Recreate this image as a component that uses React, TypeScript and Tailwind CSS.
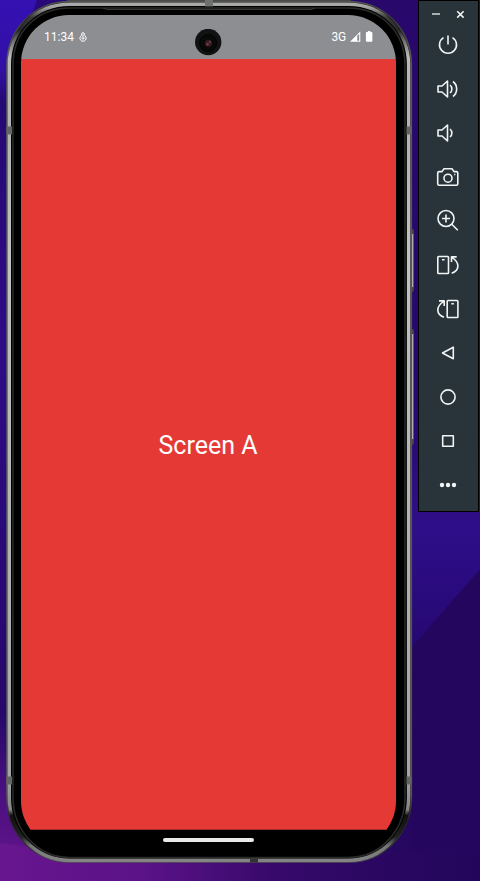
import React from "react";

const FRAME = "M70 1.5H348C384 1.5 411.3 29 411.3 65V797C411.3 834 384 862 348 862H70C34 862 7 834 7 797V65C7 29 34 1.5 70 1.5Z";
const METAL = "M70 4.2H348C383 4.2 408.6 31 408.6 65V797C408.6 832 383 860.2 348 860.2H70C35 860.2 9.3 832 9.3 797V65C9.3 31 35 4.2 70 4.2Z";
const INNER = "M70 8H348C381 8 405 32 405 65V797C405 830 381 857.5 348 857.5H70C37 857.5 13 830 13 797V65C13 32 37 8 70 8Z";

function Wallpaper() {
  return (
    <svg className="absolute inset-0" width="480" height="881" viewBox="0 0 480 881">
      <defs>
        <linearGradient id="wallRight" x1="0" y1="0" x2="0" y2="1">
          <stop offset="0" stopColor="#29086c" />
          <stop offset=".45" stopColor="#27086e" />
          <stop offset=".6" stopColor="#2f0e8a" />
          <stop offset=".73" stopColor="#260872" />
          <stop offset="1" stopColor="#25075e" />
        </linearGradient>
        <linearGradient id="wallLeft" x1="0" y1="0" x2="0" y2="1">
          <stop offset="0" stopColor="#3510b2" />
          <stop offset=".08" stopColor="#3210a5" />
          <stop offset=".12" stopColor="#250973" />
          <stop offset=".4" stopColor="#2d0c88" />
          <stop offset=".83" stopColor="#25096a" />
          <stop offset=".92" stopColor="#4a1080" />
          <stop offset="1" stopColor="#60138a" />
        </linearGradient>
        <linearGradient id="wallFloor" x1="0" y1="0" x2="1" y2="0">
          <stop offset="0" stopColor="#67168f" />
          <stop offset=".3" stopColor="#5b1287" />
          <stop offset=".58" stopColor="#36096a" />
          <stop offset=".85" stopColor="#27075f" />
          <stop offset="1" stopColor="#23065b" />
        </linearGradient>
      </defs>
      <rect width="480" height="881" fill="url(#wallRight)" />
      <rect width="110" height="860" fill="url(#wallLeft)" />
      <path d="M37 0H110V60H17Z" fill="#290978" />
      <path d="M480 569L412 647V881H480Z" fill="#25065f" />
      <path d="M0 843L60 850H480V881H0Z" fill="url(#wallFloor)" />
    </svg>
  );
}

function PhoneFrame() {
  return (
    <svg className="absolute inset-0" width="418" height="881" viewBox="0 0 418 881" fill="none">
      <defs>
        <linearGradient id="metal" gradientUnits="userSpaceOnUse" x1="0" y1="0" x2="0" y2="863">
          <stop offset="0" stopColor="#b4b5b3" />
          <stop offset=".009" stopColor="#a0a19f" />
          <stop offset=".02" stopColor="#3a3b3a" />
          <stop offset=".035" stopColor="#252625" />
          <stop offset=".045" stopColor="#646564" />
          <stop offset=".065" stopColor="#b9bab9" />
          <stop offset=".15" stopColor="#b2b2b2" />
          <stop offset=".3" stopColor="#c2c2c2" />
          <stop offset=".9" stopColor="#a5a5a5" />
          <stop offset=".938" stopColor="#858585" />
          <stop offset=".945" stopColor="#111" />
          <stop offset=".97" stopColor="#222" />
          <stop offset=".98" stopColor="#777" />
          <stop offset="1" stopColor="#858585" />
        </linearGradient>
        <linearGradient id="rim" gradientUnits="userSpaceOnUse" x1="0" y1="0" x2="0" y2="863">
          <stop offset="0" stopColor="#555754" />
          <stop offset=".02" stopColor="#3a3b3a" />
          <stop offset=".06" stopColor="#555754" />
          <stop offset=".92" stopColor="#555754" />
          <stop offset=".95" stopColor="#222" />
          <stop offset=".985" stopColor="#333" />
          <stop offset="1" stopColor="#555754" />
        </linearGradient>
      </defs>
      <path d="M67 .5H351" stroke="#464745" />
      <path d="M411 229H413L414 231V290L413 292H411ZM411 329H413L414 331V443L413 445H411Z" fill="#444" />
      <path d="M412.5 234V287M412.5 334V439" stroke="#b7b7b7" strokeWidth="1.4" />
      <path d={FRAME} fill="#000" stroke="url(#rim)" strokeWidth="1.6" />
      <path d={METAL} stroke="url(#metal)" strokeWidth="3.4" />
      <path d={INNER} stroke="#292b29" strokeWidth="1.5" />
      <path d="M103 8L107 9.5H311L315 8" stroke="#454745" strokeWidth=".8" />
      <path d="M6.5 130.5H12M406.5 130.5H411.5M6.5 780.5H12M406.5 780.5H411.5" stroke="#646664" strokeWidth="8" />
      <path d="M209 0V6.5" stroke="#70726f" strokeWidth="8" />
      <path d="M254 858.5V862.5" stroke="#343434" strokeWidth="8" />
    </svg>
  );
}

function StatusBar() {
  return (
    <div className="flex h-11 shrink-0 items-start justify-between bg-[#8d8e92] px-[23px] pt-[15px] text-[12px] leading-[14px] text-white">
      <div className="flex gap-[5px]">
        <span>11:34</span>
        <svg className="mt-[2px]" width="8" height="10" viewBox="0 0 8 10" fill="none" stroke="white" strokeWidth="1">
          <path d="M2.7 3.4V2a1.3 1.3 0 012.6 0v1.4M4 2.5v4.7" />
          <path d="M2.2 3.5L.9 5.7A3.1 3.1 0 004 9.2a3.1 3.1 0 003.1-3.5L5.8 3.5M2.3 5.6L4 7.3l1.7-1.7" />
        </svg>
      </div>
      <div className="flex">
        <span className="tracking-[-0.2px]">3G</span>
        <svg className="ml-[4px] mt-[1px]" width="23" height="11" viewBox="0 0 23 11" fill="white">
          <path fillRule="evenodd" d="M0 10.8L10.3.6v10.2ZM7.2 4.8v5h2V2.9Z" />
          <path d="M17.9 0h2.5v1h1q1 0 1 1v7.8q0 1-1 1h-4.5q-1 0-1-1V2q0-1 1-1h1Z" />
        </svg>
      </div>
    </div>
  );
}

function Camera() {
  return (
    <svg className="absolute left-[195px] top-[29px]" width="27" height="27" viewBox="0 0 27 27">
      <circle cx="13.2" cy="13" r="13.2" fill="#111313" />
      <circle cx="13.2" cy="14" r="8.5" fill="#090909" stroke="#020202" />
      <circle cx="13.5" cy="14.3" r="3.5" fill="#351d20" />
      <circle cx="12.5" cy="15.3" r="1.3" fill="#7d3c35" />
      <circle cx="15" cy="13" r="1" fill="#68415f" />
    </svg>
  );
}

function Phone() {
  return (
    <main className="relative h-[881px] w-[418px] shrink-0 pl-[21px] pt-[15px]">
      <PhoneFrame />
      <div className="relative flex h-[834px] w-[375px] flex-col overflow-hidden rounded-[48px] bg-black">
        <StatusBar />
        <div className="flex h-[771px] shrink-0 items-center justify-center border-b border-[#a52927] bg-[#e53935] pr-px pt-[4px]">
          <h1 className="text-[25px] font-normal leading-8 text-white">Screen A</h1>
        </div>
        <div className="flex justify-center pt-[8px]">
          <div className="mr-px h-[3.5px] w-[91px] rounded-full bg-[#e9e9e9]" />
        </div>
      </div>
      <Camera />
    </main>
  );
}

const controls: { name: string; art: React.ReactNode }[] = [
  { name: "Power", art: <><path d="M7.5 4.6a8.5 8.5 0 109 0" /><path d="M12 2.5v9" /></> },
  { name: "Volume up", art: <><path d="M2 9v6h4l5.5 5V4L6 9Z" /><path d="M14 8a5.2 5.2 0 010 8M17 4.5a9.5 9.5 0 010 15" /></> },
  { name: "Volume down", art: <><path d="M2 9v6h4l5.5 5V4L6 9Z" /><path d="M14 8a5.2 5.2 0 010 8" /></> },
  { name: "Screenshot", art: <><path d="M8 3.8h8l2 2.8h2.3q1.5 0 1.5 1.5v10.7q0 1.5-1.5 1.5H3.2q-1.5 0-1.5-1.5V8.1q0-1.5 1.5-1.5H6Z" /><circle cx="12" cy="13.2" r="4" /><path d="M18.2 9.5h1.2" /></> },
  { name: "Zoom", art: <><circle cx="10" cy="9.5" r="8" /><path d="M6 9.5h8M10 5.5v8M15.8 15.2l6 6" /></> },
  { name: "Rotate left", art: <><rect x="1.8" y="3.5" width="10.7" height="17" rx=".8" /><path d="M6 6.8h2.6M15.7 20.3c7.8-3 8.5-10.3.5-15.6M20.7 3.9h-5.2v5" /></> },
  { name: "Rotate right", art: <><rect x="11.2" y="3.5" width="10.7" height="17" rx=".8" /><path d="M15.3 6.8h2.6M8 20.3C.2 17.3-.5 10 7.5 4.7M3 3.9h5.2v5" /></> },
  { name: "Back", art: <path d="M6.5 12L17.3 6.2v11.6Z" /> },
  { name: "Home", art: <circle cx="12" cy="12" r="7.1" /> },
  { name: "Overview", art: <rect x="6.7" y="6.7" width="10.6" height="10.6" /> },
  { name: "More", art: <g fill="#f1f4f5" stroke="none"><circle cx="6" cy="12" r="2.2" /><circle cx="12" cy="12" r="2.2" /><circle cx="18" cy="12" r="2.2" /></g> },
];

function EmulatorControls() {
  return (
    <aside className="relative flex h-[512px] w-[61px] shrink-0 flex-col border border-black bg-[#29343a] pr-px">
      <div className="flex h-[22px] items-center justify-center gap-[16px] pt-[4px]">
        <span className="h-[1.5px] w-2 bg-[#a7afb3]" />
        <svg className="-mr-[1px]" width="9" height="9" viewBox="0 0 9 9" fill="none" stroke="#f1f4f5" strokeWidth="1.6"><path d="M1.2 1.2l6.4 6.4M7.6 1.2L1.2 7.6" /></svg>
      </div>
      {controls.map((control) => (
        <button key={control.name} aria-label={control.name} className="flex h-11 shrink-0 items-center justify-center">
          <svg width="24" height="24" viewBox="0 0 24 24" fill="none" stroke="#f1f4f5" strokeWidth="1.6" strokeLinejoin="round">
            {control.art}
          </svg>
        </button>
      ))}
    </aside>
  );
}

export default function App() {
  return (
    <div className="relative flex h-[881px] w-[480px] items-start overflow-hidden font-[Roboto,sans-serif]">
      <Wallpaper />
      <Phone />
      <EmulatorControls />
    </div>
  );
}
